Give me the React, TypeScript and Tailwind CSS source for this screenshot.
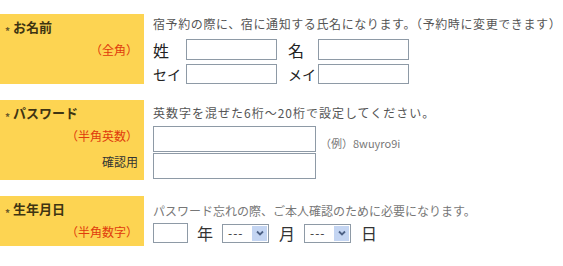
const font = { fontFamily: '"Noto Sans CJK JP", "Noto Sans", sans-serif' };

function Label({ title, note, extra }: { title: string; note: string; extra?: string }) {
  return (
    <div className="flex w-[144px] shrink-0 flex-col bg-[#fdd452] pl-[5px] pr-[6px] pt-[3px]">
      <div className="flex items-center text-[13px] font-bold leading-[20px] text-[#3f3412]">
        <span className="mr-[3px] mt-[8px] text-[10px] leading-none text-[#6b5a2a]">*</span>
        {title}
      </div>
      <div className="mt-[4px] text-right text-[12px] leading-[18px] text-[#e03a0c]">（{note}）</div>
      {extra && <div className="mt-[8px] text-right text-[12px] leading-[18px] text-[#333]">{extra}</div>}
    </div>
  );
}

function Box({ w, h }: { w: string; h: string }) {
  return <div className={`${w} ${h} border border-[#8e9aa6] bg-white`} />;
}

function Select() {
  return (
    <div className="flex h-[19px] w-[47px] items-center border border-[#8e9aa6] bg-white pl-[5px]">
      <span className="flex-1 text-[12px] leading-none tracking-[1px] text-[#333]">---</span>
      <span className="mr-[1px] flex h-[15px] w-[15px] items-center justify-center bg-[#c4d5f2]">
        <svg width="8" height="6" viewBox="0 0 8 6">
          <path d="M1 1.5 L4 4.5 L7 1.5" fill="none" stroke="#4d6185" strokeWidth="1.8" />
        </svg>
      </span>
    </div>
  );
}

export default function App() {
  return (
    <div className="h-[266px] w-[563px] bg-white pt-[14px]" style={font}>
      <div className="flex h-[70px]">
        <Label title="お名前" note="全角" />
        <div className="pl-[9px] pt-[1px] text-[#555]">
          <div className="whitespace-nowrap text-[12px] leading-[18px] tracking-[0.6px]">宿予約の際に、宿に通知する氏名になります。（予約時に変更できます）</div>
          <div className="mt-[6px] flex items-center text-[#222]">
            <span className="w-[33px] text-[16px] leading-none">姓</span>
            <Box w="w-[91px]" h="h-[21px]" />
            <span className="ml-[11px] w-[30px] text-[16px] leading-none">名</span>
            <Box w="w-[91px]" h="h-[21px]" />
          </div>
          <div className="mt-[4px] flex items-center text-[#222]">
            <span className="w-[33px] text-[14px] leading-none">セイ</span>
            <Box w="w-[91px]" h="h-[20px]" />
            <span className="ml-[11px] w-[30px] text-[14px] leading-none">メイ</span>
            <Box w="w-[91px]" h="h-[20px]" />
          </div>
        </div>
      </div>

      <div className="mt-[16px] flex h-[80px]">
        <Label title="パスワード" note="半角英数" extra="確認用" />
        <div className="pl-[9px] pt-[4px] text-[#555]">
          <div className="whitespace-nowrap text-[12px] leading-[18px] tracking-[1px]">英数字を混ぜた6桁～20桁で設定してください。</div>
          <div className="mt-[4px] flex items-end">
            <Box w="w-[163px]" h="h-[26px]" />
            <span className="mb-[3px] ml-[4px] text-[11px] leading-none text-[#777]">（例）8wuyro9i</span>
          </div>
          <div className="mt-[1px]">
            <Box w="w-[163px]" h="h-[26px]" />
          </div>
        </div>
      </div>

      <div className="mt-[16px] flex h-[50px]">
        <Label title="生年月日" note="半角数字" />
        <div className="pl-[9px] pt-[6px] text-[#555]">
          <div className="whitespace-nowrap text-[12px] leading-[18px] text-[#777]">パスワード忘れの際、ご本人確認のために必要になります。</div>
          <div className="mt-[3px] flex items-center text-[16px] leading-none text-[#333]">
            <Box w="w-[35px]" h="h-[20px]" />
            <span className="ml-[9px] mr-[9px]">年</span>
            <Select />
            <span className="ml-[10px] mr-[9px]">月</span>
            <Select />
            <span className="ml-[10px]">日</span>
          </div>
        </div>
      </div>
    </div>
  );
}
